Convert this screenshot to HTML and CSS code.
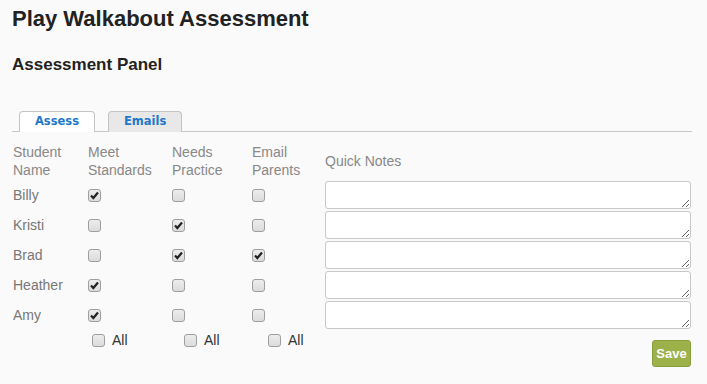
FILE: index.html
```html
<!DOCTYPE html>
<html>
<head>
<meta charset="utf-8">
<link rel="stylesheet" href="styles.css">
</head>
<body>
<div class="page">
  <h1 class="title">Play Walkabout Assessment</h1>
  <h2 class="subtitle">Assessment Panel</h2>
  <div class="tabs">
    <div class="tab active">Assess</div>
    <div class="tab">Emails</div>
  </div>
  <div class="grid">
    <div class="hd">Student<br>Name</div>
    <div class="hd">Meet<br>Standards</div>
    <div class="hd">Needs<br>Practice</div>
    <div class="hd">Email<br>Parents</div>
    <div class="hd notes-hd">Quick Notes</div>

    <div class="name">Billy</div>
    <div class="cell"><input type="checkbox" class="cb" checked></div>
    <div class="cell"><input type="checkbox" class="cb"></div>
    <div class="cell"><input type="checkbox" class="cb"></div>
    <div class="cell"><textarea class="note"></textarea></div>

    <div class="name">Kristi</div>
    <div class="cell"><input type="checkbox" class="cb"></div>
    <div class="cell"><input type="checkbox" class="cb" checked></div>
    <div class="cell"><input type="checkbox" class="cb"></div>
    <div class="cell"><textarea class="note"></textarea></div>

    <div class="name">Brad</div>
    <div class="cell"><input type="checkbox" class="cb"></div>
    <div class="cell"><input type="checkbox" class="cb" checked></div>
    <div class="cell"><input type="checkbox" class="cb" checked></div>
    <div class="cell"><textarea class="note"></textarea></div>

    <div class="name">Heather</div>
    <div class="cell"><input type="checkbox" class="cb" checked></div>
    <div class="cell"><input type="checkbox" class="cb"></div>
    <div class="cell"><input type="checkbox" class="cb"></div>
    <div class="cell"><textarea class="note"></textarea></div>

    <div class="name">Amy</div>
    <div class="cell"><input type="checkbox" class="cb" checked></div>
    <div class="cell"><input type="checkbox" class="cb"></div>
    <div class="cell"><input type="checkbox" class="cb"></div>
    <div class="cell"><textarea class="note"></textarea></div>

    <div class="allcell"></div>
    <label class="all all-1"><input type="checkbox" class="cb"><span>All</span></label>
    <label class="all all-2"><input type="checkbox" class="cb"><span>All</span></label>
    <label class="all all-3"><input type="checkbox" class="cb"><span>All</span></label>
    <div class="save-cell"><button class="save">Save</button></div>
  </div>
</div>
</body>
</html>
```
FILE: styles.css
```css
html, body {
  margin: 0;
  padding: 0;
  background: #fafafa;
}
body {
  font-family: "Liberation Sans", Arial, sans-serif;
  color: #333;
}
.page {
  padding: 6px 15px 0 12px;
}
.title {
  margin: 0;
  font-size: 22px;
  line-height: 26px;
  font-weight: bold;
  color: #222;
}
.subtitle {
  margin: 23px 0 0 0;
  font-size: 17px;
  line-height: 20px;
  font-weight: bold;
  color: #222;
}
.tabs {
  margin-top: 36px;
  display: flex;
  gap: 13px;
  padding-left: 7px;
  border-bottom: 1px solid #c8c8c8;
  height: 20px;
}
.tab {
  box-sizing: border-box;
  height: 21px;
  padding: 0 15px;
  border: 1px solid #c4c4c4;
  border-bottom: none;
  border-radius: 4px 4px 0 0;
  background: #e8e8e8;
  font-family: "DejaVu Sans", Verdana, sans-serif;
  font-weight: bold;
  font-size: 11.5px;
  line-height: 19px;
  color: #1f78c8;
}
.tab.active {
  background: #fff;
  width: 76px;
  padding: 0;
  text-align: center;
  height: 21px;
  position: relative;
  z-index: 1;
}
.grid {
  margin-top: 11px;
  display: grid;
  grid-template-columns: 76px 84px 80px 73px 366px;
  grid-template-rows: 37px repeat(5, 30px) auto;
  font-size: 14px;
}
.hd {
  line-height: 18px;
  color: #888;
}
.hd:first-child {
  padding-left: 1px;
}
.notes-hd {
  padding-top: 9px;
}
.name {
  display: flex;
  align-items: center;
  color: #777;
  padding-left: 1px;
}
.cell {
  display: flex;
  align-items: center;
}
.cb {
  appearance: none;
  -webkit-appearance: none;
  box-sizing: border-box;
  width: 13px;
  height: 13px;
  margin: 0;
  border: 1px solid #9e9e9e;
  border-radius: 3px;
  background: linear-gradient(#ececec, #dcdcdc);
  display: block;
}
.cb:checked {
  background-image: url("data:image/svg+xml,%3Csvg xmlns='http://www.w3.org/2000/svg' width='11' height='11' viewBox='0 0 11 11'%3E%3Cpath d='M2 5.6 L4.3 8 L9 2.5' fill='none' stroke='%23222' stroke-width='2.2'/%3E%3C/svg%3E"), linear-gradient(#ececec, #dcdcdc);
  background-repeat: no-repeat;
  background-position: center;
}
.note {
  box-sizing: border-box;
  width: 366px;
  height: 28px;
  margin: 0;
  border: 1px solid #c8c8c8;
  border-radius: 3px;
  background: #fff;
  display: block;
  font-family: "Liberation Sans", Arial, sans-serif;
}
.all {
  display: flex;
  align-items: center;
  height: 20px;
  align-self: start;
  color: #333;
}
.all span {
  margin-left: 7px;
}
.all-1 { padding-left: 4px; }
.all-2 { padding-left: 12px; }
.all-3 { padding-left: 16px; }
.save-cell {
  display: flex;
  justify-content: flex-end;
  padding-top: 10px;
}
.save {
  box-sizing: border-box;
  width: 39px;
  height: 27px;
  padding: 0;
  border: 1px solid #8a9e3e;
  border-radius: 3px;
  background: #9db14b;
  color: #fff;
  font-family: "Liberation Sans", Arial, sans-serif;
  font-weight: bold;
  font-size: 13px;
}
```
